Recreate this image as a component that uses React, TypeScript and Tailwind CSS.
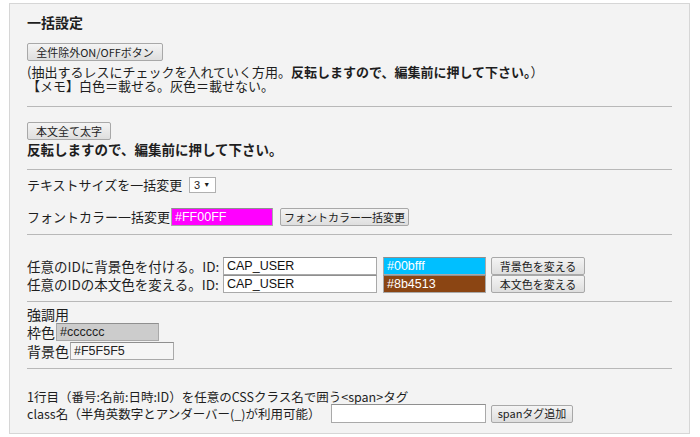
const jp = { fontFamily: '"Noto Sans CJK JP", "Liberation Sans", sans-serif' };

const Btn = ({ label, w }: { label: string; w: string }) => (
  <button
    className={`${w} flex h-[18px] shrink-0 items-center justify-center overflow-hidden whitespace-nowrap rounded-[2px] border border-[#a8a8a8] bg-gradient-to-b from-[#f4f4f4] to-[#dedede] px-0 pb-[1px] text-[11px] leading-[12px] text-[#222]`}
    style={jp}
  >
    {label}
  </button>
);

const Field = ({
  value,
  w,
  cls = 'bg-white text-[#111]',
}: {
  value: string;
  w: string;
  cls?: string;
}) => (
  <div
    className={`${w} h-[18px] shrink-0 overflow-hidden whitespace-nowrap border border-[#a9a9a9] border-t-[#8f8f8f] px-[3px] text-[12.5px] leading-[16px] ${cls}`}
    style={{ fontFamily: '"Liberation Sans", Arial, sans-serif' }}
  >
    {value}
  </div>
);

const Rule = ({ mt }: { mt: string }) => <div className={`${mt} border-t border-[#b8b8b8]`} />;

export default function App() {
  return (
    <div className="w-[700px] h-[437px] overflow-hidden bg-white pt-[3px] pl-[9px] text-[#1e1e1e]" style={jp}>
      <div className="w-[681px] h-[431px] border border-[#d6d6d6] bg-[#f3f3f3] px-[17px] pt-[10px]">
        <div className="h-[16px] text-[14px] leading-[16px] font-bold">一括設定</div>

        <div className="mt-[13px] h-[18px]">
          <Btn label="全件除外ON/OFFボタン" w="w-[136px]" />
        </div>
        <div className="mt-[4px] text-[13px] leading-[14px]">
          <div className="h-[14px] whitespace-nowrap">
            (抽出するレスにチェックを入れていく方用。<span className="font-bold">反転しますので、編集前に押して下さい。</span>）
          </div>
          <div className="h-[14px] whitespace-nowrap">【メモ】白色＝載せる。灰色＝載せない。</div>
        </div>

        <Rule mt="mt-[13px]" />

        <div className="mt-[15px] h-[18px]">
          <Btn label="本文全て太字" w="w-[84px]" />
        </div>
        <div className="mt-[2px] h-[14px] text-[13.5px] leading-[14px] font-bold whitespace-nowrap">
          反転しますので、編集前に押して下さい。
        </div>

        <Rule mt="mt-[13px]" />

        <div className="mt-[7px] flex h-[16px] items-center text-[13px] leading-[16px]">
          <span className="w-[162px] whitespace-nowrap">テキストサイズを一括変更</span>
          <div
            className="flex h-[16px] w-[27px] items-center gap-[3px] border border-[#b0b0b0] bg-white pl-[4px] text-[11px] leading-[14px]"
            style={{ fontFamily: '"Liberation Sans", Arial, sans-serif' }}
          >
            <span>3</span>
            <span className="text-[7px]">▼</span>
          </div>
        </div>

        <div className="mt-[15px] flex h-[18px] items-center text-[13px] leading-[18px]">
          <span className="w-[144px] whitespace-nowrap">フォントカラー一括変更</span>
          <Field value="#FF00FF" w="w-[102px]" cls="bg-[#ff00ff] text-white" />
          <div className="ml-[7px] h-[18px]">
            <Btn label="フォントカラー一括変更" w="w-[129px]" />
          </div>
        </div>

        <Rule mt="mt-[8px]" />

        <div className="mt-[22px] text-[13.5px] leading-[18px]">
          <div className="flex h-[18px] items-center">
            <span className="w-[196px] whitespace-nowrap">任意のIDに背景色を付ける。ID:</span>
            <Field value="CAP_USER" w="w-[154px]" />
            <div className="ml-[6px] h-[18px]">
              <Field value="#00bfff" w="w-[103px]" cls="bg-[#00bfff] text-white" />
            </div>
            <div className="ml-[5px] h-[18px]">
              <Btn label="背景色を変える" w="w-[94px]" />
            </div>
          </div>
          <div className="flex h-[18px] items-center">
            <span className="w-[196px] whitespace-nowrap">任意のIDの本文色を変える。ID:</span>
            <Field value="CAP_USER" w="w-[154px]" />
            <div className="ml-[6px] h-[18px]">
              <Field value="#8b4513" w="w-[103px]" cls="bg-[#8b4513] text-white" />
            </div>
            <div className="ml-[5px] h-[18px]">
              <Btn label="本文色を変える" w="w-[94px]" />
            </div>
          </div>
        </div>

        <Rule mt="mt-[8px]" />

        <div className="mt-[5px] h-[14px] text-[14px] leading-[14px]">強調用</div>
        <div className="mt-[2px] flex h-[18px] items-center text-[14px] leading-[18px]">
          <span className="w-[29px] whitespace-nowrap">枠色</span>
          <Field value="#cccccc" w="w-[103px]" cls="bg-[#cccccc] text-[#222]" />
        </div>
        <div className="mt-[1px] flex h-[18px] items-center text-[14px] leading-[18px]">
          <span className="w-[43px] whitespace-nowrap">背景色</span>
          <Field value="#F5F5F5" w="w-[104px]" cls="bg-[#f5f5f5] text-[#222]" />
        </div>

        <Rule mt="mt-[8px]" />

        <div className="mt-[21px] h-[14px] text-[12.5px] leading-[14px] whitespace-nowrap">
          1行目（番号:名前:日時:ID）を任意のCSSクラス名で囲う&lt;span&gt;タグ
        </div>
        <div className="flex h-[19px] items-center text-[12.5px] leading-[19px]">
          <span className="w-[304px] whitespace-nowrap">class名（半角英数字とアンダーバー(_)が利用可能）</span>
          <Field value="" w="w-[155px] h-[19px]" />
          <div className="ml-[5px] h-[18px]">
            <Btn label="spanタグ追加" w="w-[82px]" />
          </div>
        </div>
      </div>
    </div>
  );
}
